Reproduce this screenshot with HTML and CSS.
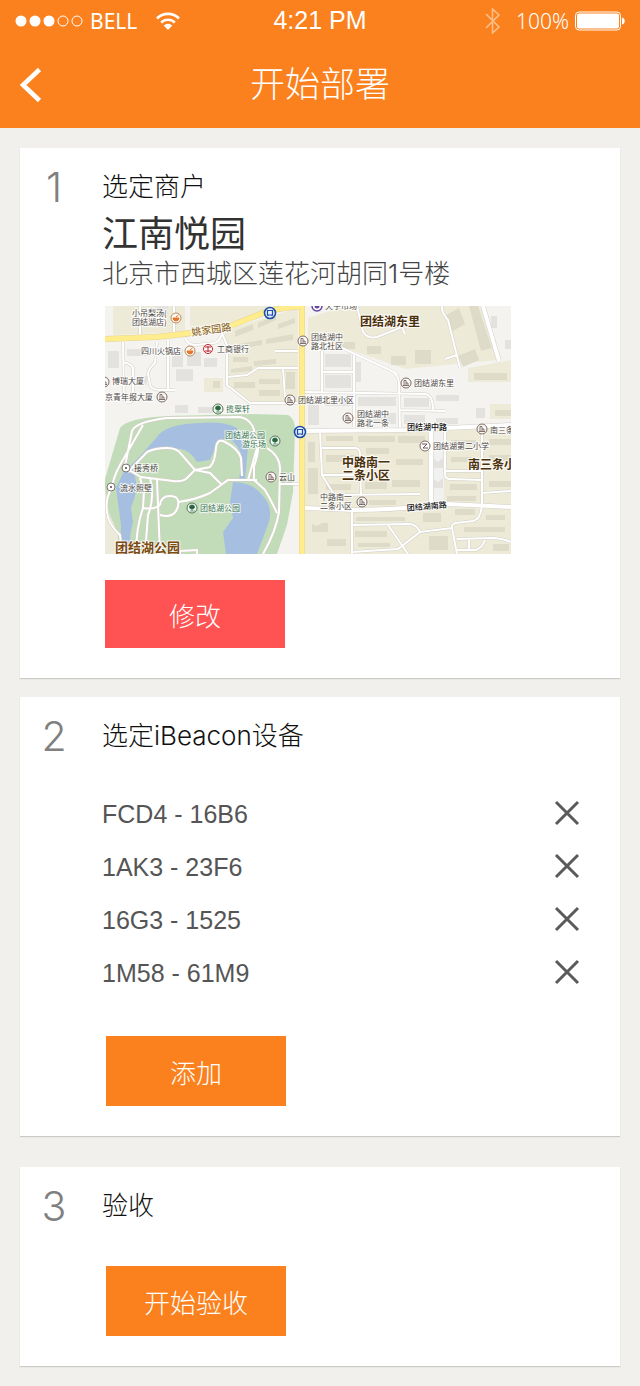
FILE: index.html
```html
<!DOCTYPE html>
<html lang="zh-CN">

<head>
    <meta charset="utf-8">
    <meta name="viewport" content="width=device-width, initial-scale=1">
    <title>开始部署</title>
    <link rel="stylesheet" href="styles.css">
</head>

<body>
    <header class="header">
        <div class="status">
            <div class="status-left">
                <svg class="signal" width="68" height="12" viewBox="0 0 68 12">
                    <g fill="#fff">
                        <circle cx="6" cy="6" r="5.5" />
                        <circle cx="20" cy="6" r="5.5" />
                        <circle cx="34" cy="6" r="5.5" />
                    </g>
                    <g fill="none" stroke="#fff">
                        <circle cx="48" cy="6" r="5" />
                        <circle cx="62" cy="6" r="5" />
                    </g>
                </svg>
                <span class="carrier">BELL</span>
                <svg class="wifi" width="24" height="18" viewBox="0 0 24 18">
                    <path d="M1 6.5a15.5 15.5 0 0 1 22 0M5.2 10.6a9.6 9.6 0 0 1 13.6 0" fill="none" stroke="#fff" stroke-width="2.6" />
                    <path d="M12 18l-4.3-4.4a6 6 0 0 1 8.6 0z" fill="#fff" />
                </svg>
            </div>
            <span class="time">4:21 PM</span>
            <div class="status-right">
                <svg class="bluetooth" width="16" height="26" viewBox="0 0 16 26">
                    <path d="M1 6l13 13-6.5 6V1l6.5 6L1 20" fill="none" stroke="#fdbf88" stroke-width="1.6" />
                </svg>
                <span class="percent">100%</span>
                <svg class="battery" width="50" height="20" viewBox="0 0 50 20">
                    <rect x=".5" y="1" width="45" height="18" rx="3.5" fill="none" stroke="#fff" />
                    <rect x="2" y="2.5" width="42" height="15" rx="2" fill="#fff" />
                    <path d="M47 6.5a3.6 3.6 0 0 1 0 7z" fill="#fff" />
                </svg>
            </div>
        </div>
        <nav class="nav">
            <a class="back" href="#" aria-label="返回">
                <svg width="22" height="36" viewBox="0 0 22 36">
                    <path d="M19.5 2.5L3 18l16.5 15.5" fill="none" stroke="#fff" stroke-width="4.6" />
                </svg>
            </a>
            <h1 class="title">开始部署</h1>
        </nav>
    </header>

    <main class="steps">
        <!-- 1: merchant -->
        <section class="card">
            <span class="num">1</span>
            <div class="content">
                <h2 class="heading">选定商户</h2>
                <p class="shop">江南悦园</p>
                <p class="address">北京市西城区莲花河胡同1号楼</p>
                <svg class="map" viewBox="0 0 406 248" role="img" aria-label="地图">
                    <defs>
                        <g id="small-roads">
                            <path d="M35 0V29M69 0V28M18 36L19 94Q24 99 28 94V62Q27 58 18 56M63 34V84M52 36L50 57Q43 63 43 68L45 79Q47 84 55 84H70" />
                            <path d="M80 32Q83 39 90 39L109 37Q115 36 117 27L122 39V79L145 97H193M122 71L142 69L153 62H193M178 62L180 91M170 45H193" />
                            <path d="M217 44V86M217 66H248M249 49V121M237 42L285 64Q294 68 294 78L295 121M200 86L320 88Q328 89 328 104M295 104L340 105" />
                            <path d="M252 0L258 26Q263 33 272 31L297 21L300 28M337 0Q336 6 343 14L355 62M340 53L352 49" />
                            <path d="M340 124V168Q340 173 345 173L377 174M340 165H377M377 119V195Q377 213 368 215L351 217Q346 218 347 222L352 248" />
                            <path d="M215 126L217 169L230 190M217 142L250 142Q255 142 255 148L256 190M217 169H255M228 189L315 188" />
                            <path d="M247 204V248M247 219L305 218Q312 219 315 226L347 222M283 219L303 248M247 246L293 243L315 226M352 233L387 232Q396 232 406 236M377 187L406 185M352 244H371Q377 242 380 234M364 234V244" />
                        </g>
                        <g id="big-roads">
                            <path d="M200 125L300 124L406 119M200 202L248 204Q290 204 343 198L406 201M326 124V197M378 0L394 55" />
                        </g>
                        <g id="yellow-roads">
                            <path d="M0 33L50 31Q95 27 125 20L158 7Q172 2 197 0M197 0V248" />
                        </g>
                        <g id="home">
                            <circle r="5" fill="#faf8f5" stroke="#7d6b66" />
                            <path d="M-2 2.5V-2.5H0V2.5M0 0H2V2.5M-3 2.5H3" fill="none" stroke="#6b5450" stroke-width=".8" />
                        </g>
                        <g id="food">
                            <circle r="5" fill="#fff8ed" stroke="#b58a6c" />
                            <path d="M-3 0H3Q2.5 3 0 3T-3 0M0 -1L2.5 -3" fill="#e2762b" stroke="#e2762b" />
                        </g>
                        <g id="tree">
                            <circle r="5" fill="#f4faf0" stroke="#55735c" />
                            <path d="M0 -3a2 2 0 0 1 1 4H-1A2 2 0 0 1 0 -3M0 1V3M-2 3H3" fill="#286640" stroke="#286640" stroke-width=".6" />
                        </g>
                        <g id="bus">
                            <circle r="5.5" fill="#e8f0ff" stroke="#1e4fa3" stroke-width="1.6" />
                            <path d="M-2.5 -2.5H2.5V2H-2.5ZM-2 2V3M2 2V3" fill="none" stroke="#1e4fa3" stroke-width="1.2" />
                        </g>
                        <g id="spot">
                            <circle r="4" fill="#fff" stroke="#7d7470" />
                            <circle r="1" fill="#4d4542" />
                        </g>
                    </defs>

                    <rect width="406" height="248" fill="#f4f3f0" />

                    <!-- residential blocks -->
                    <g fill="#edebd8">
                        <path d="M8 0H80V26L8 29ZM85 0H180L120 18L85 24Z" />
                        <path d="M120 24L193 2V97H146L122 79ZM99 72H118V86H99Z" />
                        <path d="M203 12L240 0H375L393 54L300 63L237 41L203 37Z" />
                        <path d="M363 62L406 54V76H363ZM385 98H406V113H385Z" />
                        <path d="M200 127L406 121V248H200ZM0 215L12 222V248H0Z" />
                    </g>
                    <path d="M327 126H339V198H327Z" fill="#f1f1ef" />

                    <!-- buildings -->
                    <g fill="#e3e2df">
                        <path d="M3 45H14V62H3ZM22 43H42V50H22ZM67 43H78V61H67ZM82 46H96V60H82ZM99 52H112V61H99ZM32 70H42V79H32ZM71 63H88V75H71ZM70 99H83V107H70ZM93 101H116V107H93ZM50 0H63V8H50Z" />
                        <path d="M220 48H246V61H220ZM220 69H246V82H220ZM251 56H256V76H251ZM253 91H291V100H253ZM253 107H291V118H253ZM203 91H214V119H203ZM220 91H245V100H220ZM299 92H324V101H299ZM299 109H320V118H299ZM331 89H354V95H331ZM331 112H353V118H331ZM371 102H380V112H371ZM386 10H392V22H386ZM400 34H406V43H400ZM329 153L333 156L338 152V162H329ZM329 173L333 176L338 172V182H329Z" />
                    </g>
                    <g fill="#dedbc9">
                        <path d="M39 4L55 2V10L39 13ZM130 25L148 18V24L130 31ZM153 17L171 9V14L153 22ZM173 18L190 12V17L173 23ZM133 38L157 34V39L133 43ZM161 33L188 28V34L161 38ZM149 55L171 53V58L149 60ZM128 51H143V56H128ZM126 63L147 60V65L126 67ZM129 76H150V82H129ZM154 73H175V78H154ZM154 84H175V90H154ZM181 66H190V83H181ZM108 75H115V82H108Z" />
                        <path d="M262 40H276V48H262ZM286 50H301V59H286ZM310 44H326V58H310ZM237 36H250V43H237ZM340 10L354 2L360 18L346 26ZM364 0H373L387 42L376 45ZM353 50L370 43L374 54L358 61ZM369 67H402V74H369ZM390 104H406V110H390Z" />
                        <path d="M203 136H210V156H203ZM203 162H213V188H203ZM221 130H248V135H221ZM253 130H290V136H253ZM293 130H320V137H293ZM221 149H251V156H221ZM261 142H284V148H261ZM291 153H318V159H291ZM221 178H246V184H221ZM260 176H282V183H260ZM287 174H315V181H287ZM264 194H291V199H264ZM346 134H371V139H346ZM346 151H371V156H346ZM384 133H406V139H384ZM384 149H406V155H384ZM345 178H372V184H345ZM384 175H406V181H384ZM342 190H371V195H342Z" />
                        <path d="M207 218L212 220L217 217H223V226H207ZM222 233H241V240H222ZM251 211H300V215H251ZM250 225H282V231H250ZM253 237H285V241H253ZM318 207H336V216H318ZM350 203H370V209H350ZM381 209H400V214H381ZM359 221H400V226H359ZM324 230H343V244H324ZM388 238H404V245H388Z" />
                    </g>

                    <!-- park and lake -->
                    <path d="M0 248V173L15 122Q22 112 62 110L145 108L183 109Q190 112 190 124L188 186L182 219L172 248Z" fill="#c2dcb9" />
                    <path d="M0 182L4 207L13 227V248H0Z" fill="#eceadb" />
                    <g fill="#a6bfe0">
                        <path d="M18 167L36 149L52 131Q60 118 95 117Q119 115 132 122L143 141L140 174H134L137 152Q134 138 124 133Q112 132 111 140L105 154L92 156Q85 144 75 143L62 142Q47 141 42 147L28 161L32 180Q30 192 26 202L28 216L25 230L28 248H15L16 219L11 182Z" />
                        <path d="M128 176Q148 176 158 190Q168 201 164 216L152 248H121L118 226L128 212L125 196Z" />
                    </g>
                    <g fill="none" stroke="#d4ccc5" stroke-width="3">
                        <path id="walks" d="M38 119L15 159Q8 172 7 182Q0 192 2 206Q3 218 15 229L17 248M20 160L27 125Q30 116 62 112L135 111Q146 113 149 124L152 142L143 174M23 166L42 146Q50 142 62 142Q72 142 76 148L90 164L81 173Q77 176 68 175L36 171L17 160M90 164L105 161Q110 156 111 142Q112 133 118 135Q133 142 136 152L137 170M90 164L105 167L117 179M152 174L123 174L105 187Q90 194 73 196M55 199Q56 190 65 190Q75 190 73 200Q70 213 55 209M52 174L55 248M45 172Q50 192 43 209L40 248M35 172L39 185L38 202Q31 222 31 248M38 202Q49 204 55 199M162 142Q175 150 175 163L174 206Q171 225 158 248M153 135Q154 148 149 160V174L160 184Q166 194 172 207M75 248V245L92 244V248M174 178H196" />
                        <use href="#walks" stroke="#fff" stroke-width="2" />
                    </g>

                    <!-- streets -->
                    <g fill="none">
                        <use href="#small-roads" stroke="#d3cfc9" stroke-width="3" />
                        <use href="#big-roads" stroke="#d3cfc9" stroke-width="5" />
                        <use href="#small-roads" stroke="#fff" stroke-width="2" />
                        <use href="#big-roads" stroke="#fff" stroke-width="4" />
                        <use href="#yellow-roads" stroke="#e6d394" stroke-width="6" />
                        <use href="#yellow-roads" stroke="#ffec8b" stroke-width="5" />
                    </g>

                    <!-- markers -->
                    <use href="#food" x="71" y="12" />
                    <use href="#food" x="85" y="45" />
                    <use href="#bus" x="165" y="7" />
                    <use href="#bus" x="195" y="126" />
                    <use href="#home" x="198" y="35" />
                    <use href="#home" x="57" y="91" />
                    <use href="#home" x="-1" y="76" />
                    <use href="#home" x="185" y="94" />
                    <use href="#home" x="301" y="77" />
                    <use href="#home" x="243" y="112" />
                    <use href="#home" x="377" y="123" />
                    <use href="#home" x="257" y="196" />
                    <use href="#home" x="166" y="171" />
                    <use href="#tree" x="113" y="103" />
                    <use href="#tree" x="170" y="135" />
                    <use href="#tree" x="87" y="202" />
                    <use href="#spot" x="21" y="162" />
                    <use href="#spot" x="6" y="181" />
                    <circle cx="103" cy="43" r="4.5" fill="#fff" stroke="#bd2430" />
                    <path d="M100 41H106M100 45H106M103 40V46" stroke="#bd2430" />
                    <circle cx="212" cy="0" r="5" fill="#fff" stroke="#6547a4" stroke-width="1.5" />
                    <circle cx="212" cy="0" r="2.5" fill="#6547a4" />
                    <circle cx="320" cy="140" r="5" fill="#fff" stroke="#7d6b66" />
                    <path d="M317 138H322L318 142H323" fill="none" stroke="#6b5450" />

                    <!-- place names -->
                    <g class="place">
                        <text x="27" y="10">小吊梨汤(</text>
                        <text x="27" y="19">团结湖店)</text>
                        <text x="36" y="48">四川火锅店</text>
                        <text x="112" y="46">工商银行</text>
                        <text x="7" y="78">博瑞大厦</text>
                        <text x="0" y="94">京青年报大厦</text>
                        <text x="220" y="3">天宇市场</text>
                        <text x="206" y="34">团结湖中</text>
                        <text x="206" y="43">路北社区</text>
                        <text x="309" y="80">团结湖东里</text>
                        <text x="193" y="97">团结湖北里小区</text>
                        <text x="252" y="111">团结湖中</text>
                        <text x="252" y="120">路北一条</text>
                        <text x="385" y="127">南三条</text>
                        <text x="328" y="143">团结湖第二小学</text>
                        <text x="215" y="194">中路南一</text>
                        <text x="215" y="203">二条小区</text>
                        <text x="29" y="165">接秀桥</text>
                        <text x="15" y="185">流水照壁</text>
                        <text x="174" y="174">云山</text>
                    </g>
                    <g class="place green">
                        <text x="121" y="106">揽翠轩</text>
                        <text x="120" y="132">团结湖公园</text>
                        <text x="137" y="141">游乐场</text>
                        <text x="95" y="205">团结湖公园</text>
                    </g>
                    <g class="place street">
                        <text x="302" y="124">团结湖中路</text>
                        <text x="302" y="205" transform="rotate(-5 302 205)">团结湖南路</text>
                    </g>
                    <text class="place avenue" x="87" y="30" transform="rotate(-8 87 30)">姚家园路</text>
                    <g class="place area">
                        <text x="255" y="20">团结湖东里</text>
                        <text x="237" y="161">中路南一</text>
                        <text x="237" y="174">二条小区</text>
                        <text x="363" y="163">南三条小</text>
                    </g>
                    <text class="place area park" x="10" y="246">团结湖公园</text>
                </svg>
                <button class="btn btn-red" type="button">修改</button>
            </div>
        </section>

        <!-- 2: devices -->
        <section class="card">
            <span class="num">2</span>
            <div class="content">
                <h2 class="heading">选定iBeacon设备</h2>
                <ul class="devices">
                    <li class="device">
                        <span>FCD4 - 16B6</span>
                        <button class="remove" type="button" aria-label="删除 FCD4 - 16B6">
                            <svg width="26" height="26" viewBox="0 0 26 26"><path d="M2 2L24 24M24 2L2 24" /></svg>
                        </button>
                    </li>
                    <li class="device">
                        <span>1AK3 - 23F6</span>
                        <button class="remove" type="button" aria-label="删除 1AK3 - 23F6">
                            <svg width="26" height="26" viewBox="0 0 26 26"><path d="M2 2L24 24M24 2L2 24" /></svg>
                        </button>
                    </li>
                    <li class="device">
                        <span>16G3 - 1525</span>
                        <button class="remove" type="button" aria-label="删除 16G3 - 1525">
                            <svg width="26" height="26" viewBox="0 0 26 26"><path d="M2 2L24 24M24 2L2 24" /></svg>
                        </button>
                    </li>
                    <li class="device">
                        <span>1M58 - 61M9</span>
                        <button class="remove" type="button" aria-label="删除 1M58 - 61M9">
                            <svg width="26" height="26" viewBox="0 0 26 26"><path d="M2 2L24 24M24 2L2 24" /></svg>
                        </button>
                    </li>
                </ul>
                <button class="btn" type="button">添加</button>
            </div>
        </section>

        <!-- 3: check -->
        <section class="card card-check">
            <span class="num">3</span>
            <div class="content">
                <h2 class="heading">验收</h2>
                <button class="btn btn-check" type="button">开始验收</button>
            </div>
        </section>
    </main>
</body>

</html>
```

FILE: styles.css
```css
* {
    box-sizing: border-box;
}

body {
    margin: 0;
    background-color: #f1f0ec;
    color: #111;
    font-family: Inter, "Noto Sans CJK SC", sans-serif;
    font-weight: 300;
}

h1,
h2,
p,
ul {
    margin: 0;
    padding: 0;
    font-weight: 300;
}

svg {
    display: block;
}

.header {
    background-color: #fa811d;
    color: #fff;
}

.status {
    display: grid;
    grid-template-columns: 1fr auto 1fr;
    align-items: center;
    height: 41px;
    padding: 0 15px;
}

.status-left,
.status-right {
    display: flex;
    align-items: center;
}

.status-right {
    justify-content: flex-end;
}

.carrier,
.percent {
    font-family: "Noto Sans", sans-serif;
    font-size: 21px;
}

.carrier {
    margin: 0 19px 0 7px;
    font-weight: 400;
}

.percent {
    margin: 0 6px 0 15px;
}

.time {
    font-family: "Liberation Sans", sans-serif;
    font-size: 25px;
    font-weight: 400;
}

.nav {
    display: grid;
    grid-template-columns: 40px 1fr 40px;
    align-items: center;
    height: 87px;
    padding: 0 20px;
}

.title {
    font-size: 35px;
    line-height: 87px;
    text-align: center;
}

.steps {
    padding: 20px 20px 19px;
}

.card {
    display: flex;
    gap: 14px;
    margin-bottom: 19px;
    padding: 20px 40px 30px 0;
    background-color: #fff;
    box-shadow: 0 1px 1px #cbcac6;
}

.card-check {
    margin: 31px 0 0;
}

.num {
    flex: none;
    width: 68px;
    color: #808080;
    font-size: 41px;
    line-height: 38px;
    text-align: center;
}

.content {
    flex: 1;
    min-width: 0;
}

.heading {
    font-size: 26px;
    line-height: 38px;
}

.shop {
    color: #333;
    font-size: 36px;
    font-weight: 400;
    line-height: 56px;
}

.address {
    color: #444;
    font-size: 26px;
    line-height: 24px;
}

.map {
    width: 100%;
    max-width: 406px;
    margin: 20px 0 26px 3px;
}

.btn {
    display: block;
    width: 180px;
    height: 70px;
    margin-left: 4px;
    padding: 0;
    border: 0;
    background-color: #fa811d;
    color: #fff;
    font: inherit;
    font-size: 26px;
}

.btn-red {
    height: 68px;
    margin-left: 3px;
    background-color: #ff5252;
}

.btn-check {
    margin-top: 41px;
}

.devices {
    margin: 33px 0 36px;
    list-style: none;
}

.device {
    display: flex;
    justify-content: space-between;
    align-items: center;
    height: 53px;
    color: #555;
    font-family: "Liberation Sans", sans-serif;
    font-size: 25px;
    font-weight: 400;
}

.remove {
    padding: 0 0 3px;
    border: 0;
    background: none;
}

.remove path {
    stroke: #5a5a5a;
    stroke-width: 3;
}

/* map labels */
.place {
    fill: #4c4644;
    stroke: #fff;
    stroke-width: 2px;
    stroke-opacity: .8;
    paint-order: stroke;
    font-family: "Noto Sans CJK SC", sans-serif;
    font-size: 8px;
    font-weight: 400;
}

.green {
    fill: #35734d;
}

.street {
    fill: #111;
    font-weight: 500;
}

.avenue {
    fill: #7a5210;
    font-size: 10px;
}

.area {
    fill: #4b300c;
    font-size: 12px;
    font-weight: 700;
}

.park {
    fill: #7d4a10;
    font-size: 13px;
}
```
